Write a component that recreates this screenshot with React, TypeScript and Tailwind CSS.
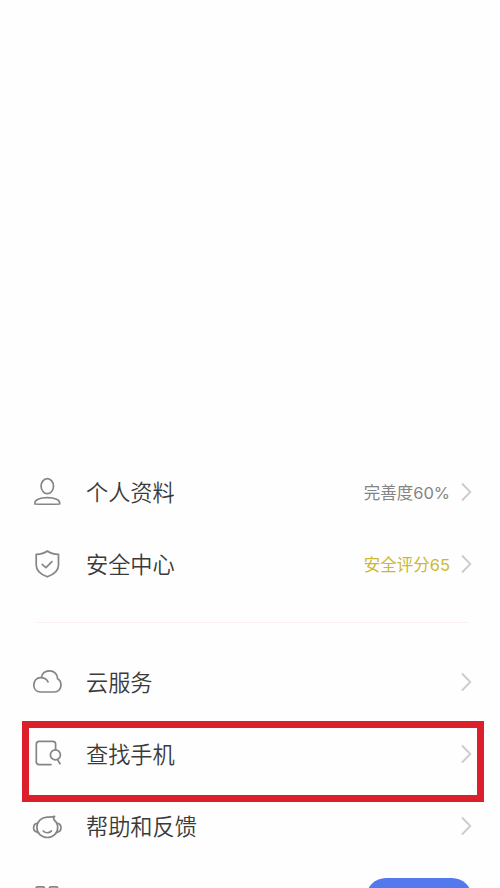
import type { ReactNode } from "react";

const Icon = ({ children }: { children: ReactNode }) => (
  <svg
    width="36"
    height="36"
    viewBox="0 0 36 36"
    fill="none"
    stroke="#858585"
    strokeWidth="1.7"
    strokeLinecap="round"
    strokeLinejoin="round"
    className="shrink-0"
  >
    {children}
  </svg>
);

const UserIcon = () => (
  <Icon>
    <ellipse cx="18.3" cy="12.2" rx="6.2" ry="7.5" />
    <path d="M6 30C5 25.5 11 23.7 18.3 23.7S31.6 25.5 30.6 30C27 30.3 9.6 30.3 6 30Z" />
  </Icon>
);

const ShieldIcon = () => (
  <Icon>
    <path d="M18.3 5C15 7.5 11 8.2 7.2 8.4V19C7.2 25 12 28.6 18.3 30.8C24.6 28.6 29.5 25 29.5 19V8.4C25.6 8.2 21.6 7.5 18.3 5Z" />
    <path d="M13.2 18.3L16.9 21.6L23 15.7" />
  </Icon>
);

const CloudIcon = () => (
  <Icon>
    <path d="M12.3 13.8C13 9.5 16.2 6.9 20.4 6.9C25.2 6.9 28.6 10.2 28.6 14.8C30.8 16 32 18.2 32 21C32 25 29.3 28 25.5 28H11.5C7.5 28 4.8 25 4.8 21C4.8 16.8 7.7 13.7 11.5 13.7C15 13.7 17.8 15.2 19 17.9" />
  </Icon>
);

const FindIcon = () => (
  <Icon>
    <path d="M22 28.6H10.2Q7.3 28.6 7.3 25.7V8.3Q7.3 5.4 10.2 5.4H23.7Q26.6 5.4 26.6 8.3V13.5" />
    <circle cx="26.4" cy="18.9" r="5" />
    <path d="M28.5 23.6L31 27.7" />
  </Icon>
);

const HelpIcon = () => (
  <Icon>
    <path d="M25.6 8.4C24.6 9.5 24.4 10.9 25.2 12C27.5 13.9 28.7 16.4 28.7 19.4C28.7 25.2 24.2 29.5 18.3 29.5S7.9 25.2 7.900 19.400C7.900 13.600 12.300 9.400 18 9.200C20.800 9.100 23.500 9.200 25.600 8.400Z" />
    <path d="M8.400 15.400C6 15.700 4.600 17.500 4.600 19.800S6 24 8.800 24.300" />
    <path d="M28.200 15.400C30.600 15.700 32 17.500 32 19.800S30.600 24 27.800 24.300" />
    <path d="M14.200 23C16.500 25.200 20 25.200 22.400 23" />
  </Icon>
);

const AppsIcon = () => (
  <Icon>
    <rect x="7" y="6.900" width="8.500" height="9" rx="1.500" />
    <rect x="20.300" y="6.900" width="8.500" height="9" rx="1.500" />
  </Icon>
);

const Chevron = () => (
  <svg
    width="12"
    height="20"
    viewBox="0 0 12 20"
    fill="none"
    stroke="#cbcbcb"
    strokeWidth="1.8"
    className="ml-2.5 shrink-0"
  >
    <path d="M2 1.5L10.3 10L2 18.5" />
  </svg>
);

interface RowProps {
  icon: ReactNode;
  label: string;
  note?: string;
  noteClass?: string;
}

const Row = ({ icon, label, note, noteClass }: RowProps) => (
  <div className="flex h-[72px] items-center pr-[28px] pl-[29px]">
    {icon}
    <p className="mb-px ml-[21px] text-[22.2px] leading-none font-[350] text-[#3a3a3a]">
      {label}
    </p>
    <p
      className={`mt-0.5 ml-auto font-[Inter,'Noto_Sans_CJK_SC',sans-serif] text-[16.5px] leading-none ${noteClass ?? ""}`}
    >
      {note}
    </p>
    <Chevron />
  </div>
);

const App = () => {
  return (
    <div className="relative h-[888px] w-[500px] overflow-hidden bg-[#fefefe] pt-[456px] font-['Noto_Sans_CJK_SC',sans-serif]">
      <Row
        icon={<UserIcon />}
        label="个人资料"
        note="完善度60%"
        noteClass="text-[#858585]"
      />
      <Row
        icon={<ShieldIcon />}
        label="安全中心"
        note="安全评分65"
        noteClass="text-[#cdb82e]"
      />
      <div className="mt-[22px] mr-[32px] mb-[23px] ml-[37px] h-px bg-[#faf0f0]"></div>
      <Row icon={<CloudIcon />} label="云服务" />
      <Row icon={<FindIcon />} label="查找手机" />
      <Row icon={<HelpIcon />} label="帮助和反馈" />
      <div className="flex h-[72px] items-center pl-[29px]">
        <AppsIcon />
      </div>

      {/* floating button */}
      <div className="absolute top-[878px] left-[366px] h-[44px] w-[106px] rounded-[20px] bg-[#5478ee]"></div>

      {/* highlight around the find phone row */}
      <div className="absolute top-[721px] left-[22px] h-[81px] w-[462px] border-[7px] border-[#dc202b]"></div>
    </div>
  );
};

export default App;
